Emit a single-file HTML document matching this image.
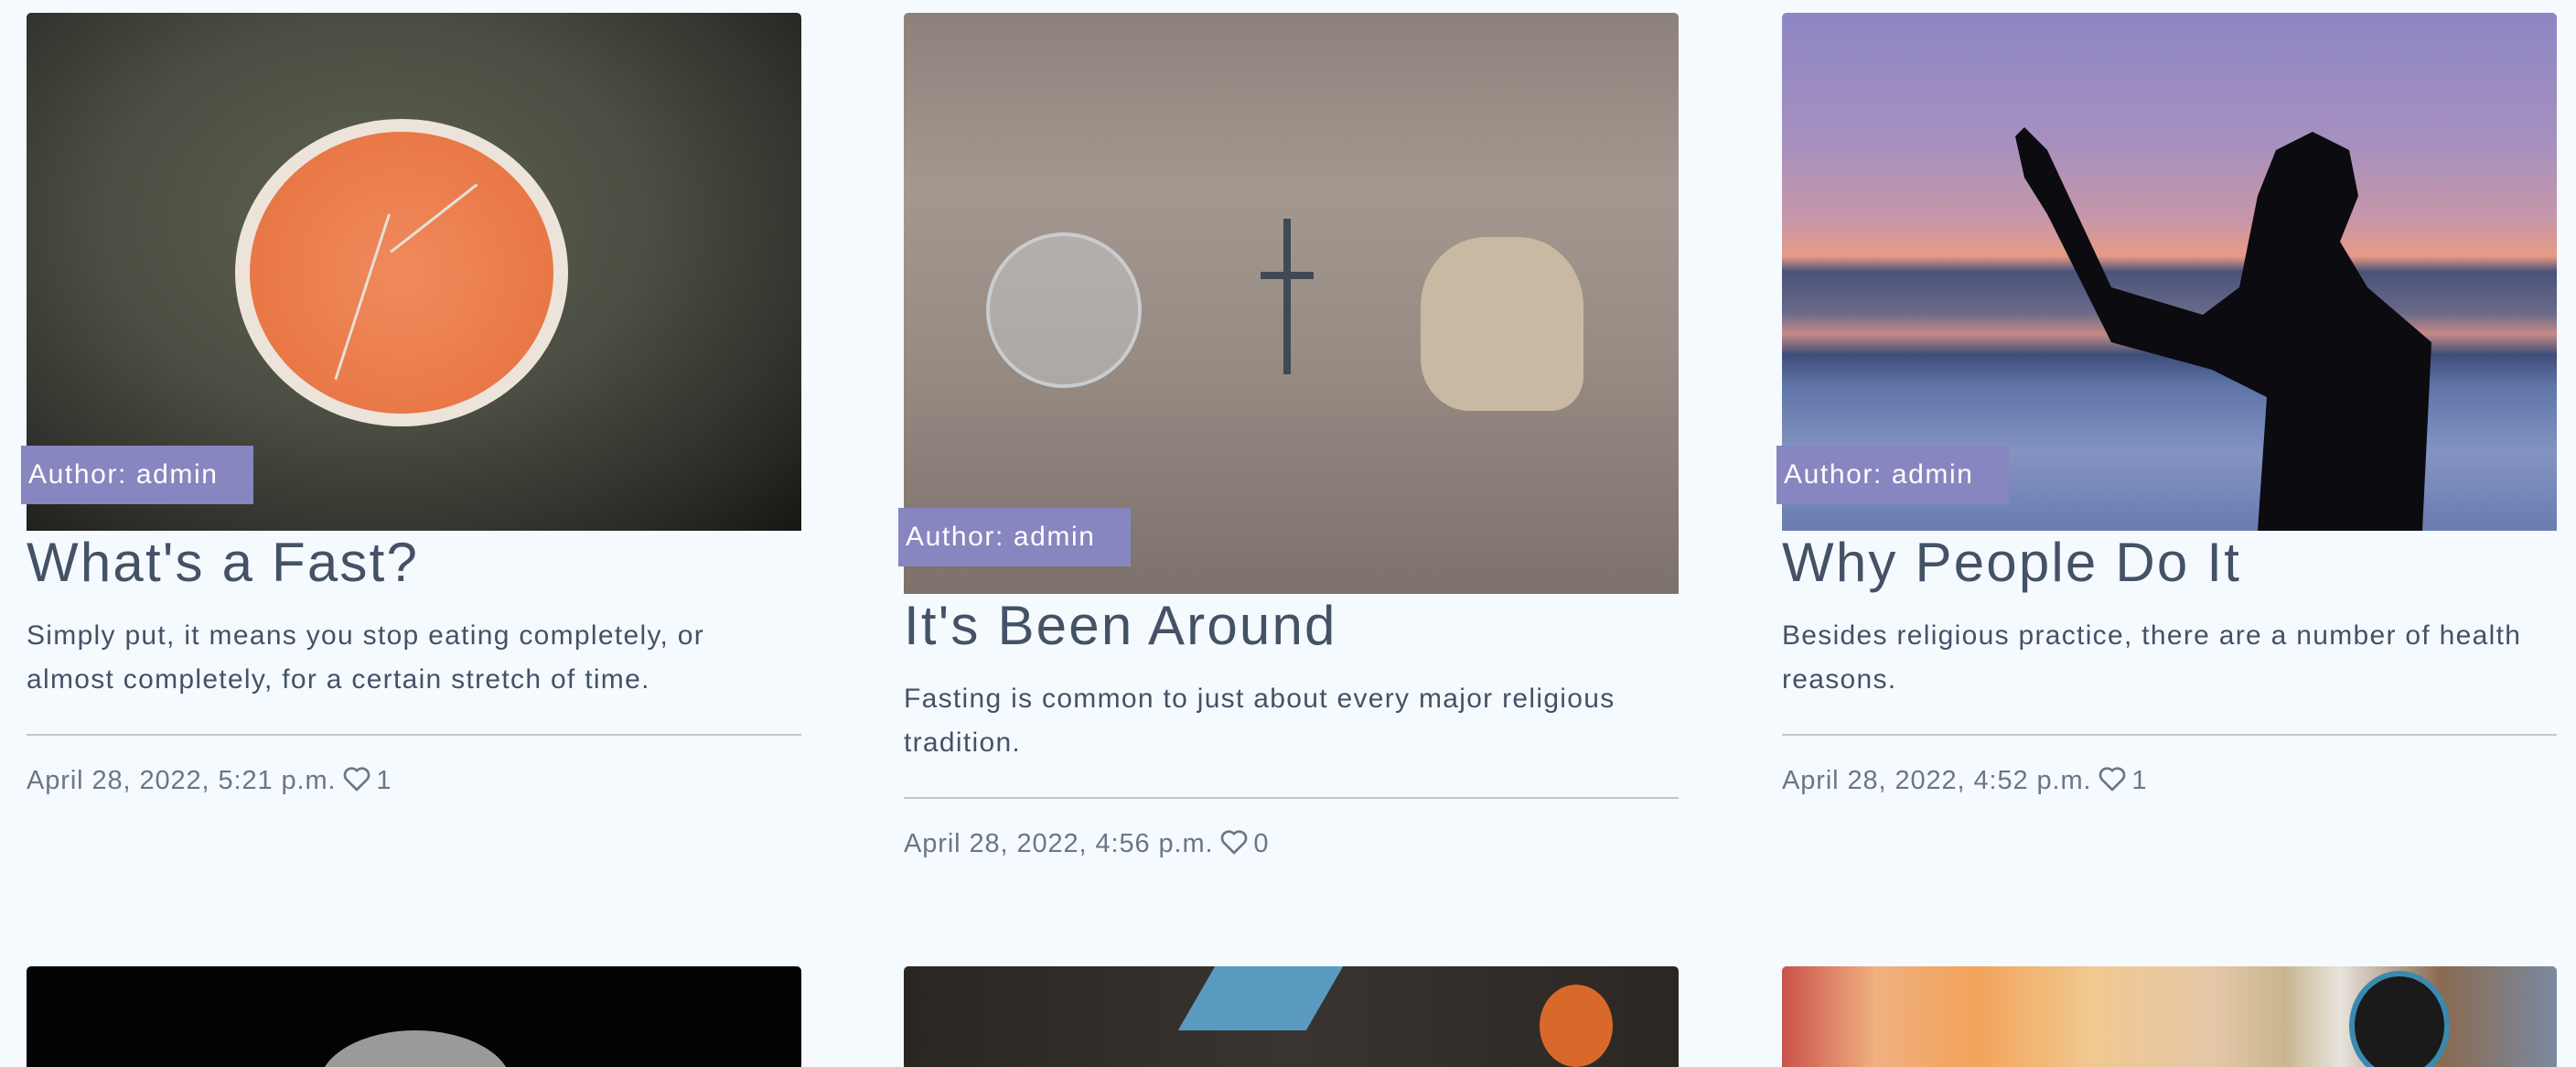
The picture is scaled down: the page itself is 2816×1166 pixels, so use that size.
<!DOCTYPE html>
<html><head><meta charset="utf-8"><style>
*{margin:0;padding:0;box-sizing:border-box}
body{width:2816px;height:1162px;background:#f5faff;font-family:"Liberation Sans",sans-serif;overflow:hidden;position:relative;color:#445266}
.card{position:absolute;width:847px;top:14px}
.img{position:relative;width:847px;border-radius:5px 5px 0 0}
.badge{position:absolute;left:-6px;background:#8886c0;color:#fff;font-size:30px;letter-spacing:1.6px;height:64px;line-height:64px;padding-left:8px;width:254px;white-space:nowrap}
h2{font-weight:normal;font-size:60px;line-height:74px;margin-top:-2px;color:#445266;letter-spacing:2.2px;white-space:nowrap}
p{font-size:30px;letter-spacing:1.3px;line-height:48px;margin-top:19px;color:#445266;white-space:nowrap}
hr{border:0;border-top:2px solid #c3c7cd;margin-top:35px}
.date{font-size:29px;letter-spacing:0.9px;line-height:48px;margin-top:25px;color:#6b7686;white-space:nowrap}
.heart{display:inline-block;vertical-align:-4px;margin:0 -4px 0 -2px}
.b{position:absolute;top:1056px;width:847px;height:110px;border-radius:5px 5px 0 0;overflow:hidden}
</style></head><body>

<div class="card" style="left:29px">
 <div class="img" style="height:566px;background:radial-gradient(ellipse at 45% 40%,#5f6152 0%,#4c4e43 45%,#2c2d28 80%,#161614 100%)">
  <div style="position:absolute;left:228px;top:116px;width:364px;height:336px;border-radius:50%;background:#ece4da"></div>
  <div style="position:absolute;left:244px;top:130px;width:332px;height:308px;border-radius:50%;background:radial-gradient(circle,#f08a5c,#e6703e)"></div>
  <div style="position:absolute;left:395px;top:220px;width:3px;height:190px;background:#e8e0d8;transform:rotate(18deg);transform-origin:top"></div>
  <div style="position:absolute;left:398px;top:260px;width:120px;height:3px;background:#e8e0d8;transform:rotate(-38deg);transform-origin:left"></div>
  <div class="badge" style="top:473px">Author: admin</div>
 </div>
 <h2>What's a Fast?</h2>
 <p>Simply put, it means you stop eating completely, or<br>almost completely, for a certain stretch of time.</p>
 <hr><div class="date">April 28, 2022, 5:21 p.m. <svg class="heart" width="32" height="30" viewBox="0 0 24 22"><path d="M12 20 L3.5 11.5 A5 5 0 0 1 12 4.5 A5 5 0 0 1 20.5 11.5 Z" fill="none" stroke="#6b7686" stroke-width="2" stroke-linejoin="round"/></svg> 1</div>
</div>

<div class="card" style="left:988px">
 <div class="img" style="height:635px;background:linear-gradient(180deg,#8d827b,#a39890 30%,#978b84 60%,#7c716b 100%)">
  <div style="position:absolute;left:90px;top:240px;width:170px;height:170px;border-radius:50%;border:4px solid #c9ccd0;background:rgba(220,225,228,0.35)"></div>
  <div style="position:absolute;left:415px;top:225px;width:8px;height:170px;background:#3f4a55"></div>
  <div style="position:absolute;left:390px;top:283px;width:58px;height:8px;background:#3f4a55"></div>
  <div style="position:absolute;left:565px;top:245px;width:178px;height:190px;border-radius:40% 40% 20% 30%;background:#c9b9a3"></div>
  <div class="badge" style="top:541px">Author: admin</div>
 </div>
 <h2>It's Been Around</h2>
 <p>Fasting is common to just about every major religious<br>tradition.</p>
 <hr><div class="date">April 28, 2022, 4:56 p.m. <svg class="heart" width="32" height="30" viewBox="0 0 24 22"><path d="M12 20 L3.5 11.5 A5 5 0 0 1 12 4.5 A5 5 0 0 1 20.5 11.5 Z" fill="none" stroke="#6b7686" stroke-width="2" stroke-linejoin="round"/></svg> 0</div>
</div>

<div class="card" style="left:1948px">
 <div class="img" style="height:566px;background:linear-gradient(180deg,#8d86c4 0%,#a690bf 25%,#c797a8 40%,#e69a85 47%,#4a5278 50%,#6a6a8a 58%,#c78a86 62%,#3e4d7a 66%,#5f74a8 72%,#8394c2 85%,#6a7cb0 100%)">
  <svg style="position:absolute;left:0;top:0" width="847" height="566" viewBox="0 0 847 566"><path d="M255 135 L265 125 L290 150 L360 300 L460 330 L500 300 L520 200 L540 150 L580 130 L620 150 L630 200 L610 250 L640 300 L710 360 L700 566 L520 566 L530 420 L470 390 L360 360 L290 220 L265 180 Z" fill="#0b0b10"/></svg>
  <div class="badge" style="top:473px">Author: admin</div>
 </div>
 <h2>Why People Do It</h2>
 <p>Besides religious practice, there are a number of health<br>reasons.</p>
 <hr><div class="date">April 28, 2022, 4:52 p.m. <svg class="heart" width="32" height="30" viewBox="0 0 24 22"><path d="M12 20 L3.5 11.5 A5 5 0 0 1 12 4.5 A5 5 0 0 1 20.5 11.5 Z" fill="none" stroke="#6b7686" stroke-width="2" stroke-linejoin="round"/></svg> 1</div>
</div>

<div class="b" style="left:29px;background:#030303"><div style="position:absolute;left:320px;top:70px;width:210px;height:120px;border-radius:50%;background:#9a9a9a"></div></div>
<div class="b" style="left:988px;background:linear-gradient(90deg,#2a2622,#3a3430 50%,#2c2722)"><div style="position:absolute;left:320px;top:0;width:140px;height:70px;background:#5a9ac0;transform:skewX(-30deg)"></div><div style="position:absolute;left:695px;top:20px;width:80px;height:90px;border-radius:50%;background:#d9692a"></div></div>
<div class="b" style="left:1948px;background:linear-gradient(90deg,#c8524a 0%,#f0b080 12%,#f2a45a 25%,#f0c890 40%,#e6c8a8 55%,#c8b690 65%,#e8e4dc 72%,#8a6a50 85%,#7a8aa0 100%)"><div style="position:absolute;left:620px;top:5px;width:110px;height:120px;border-radius:50%;background:#1a1a1a;border:6px solid #3a8ab0"></div></div>

</body></html>
